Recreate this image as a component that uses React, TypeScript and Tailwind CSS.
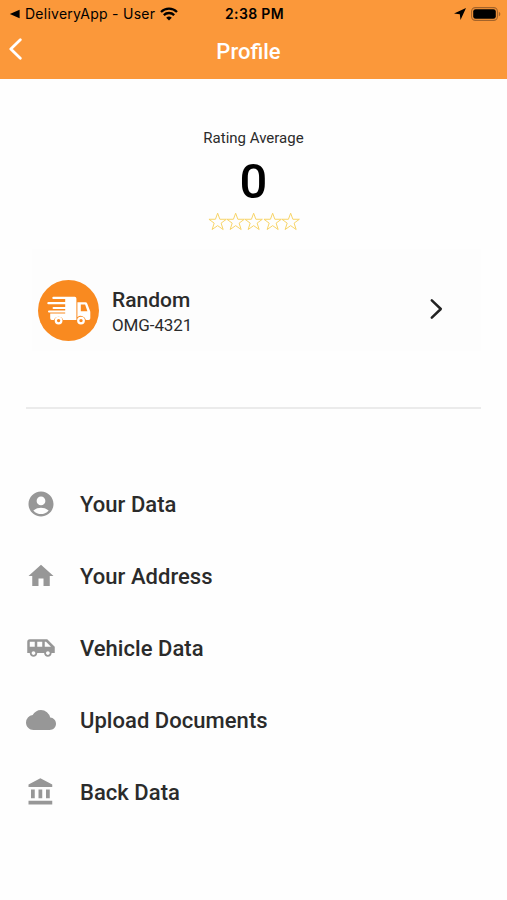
import type { ReactNode } from 'react'
import { MdAccountCircle, MdAirportShuttle, MdCloud, MdHome } from 'react-icons/md'

const StatusBar = () => (
  <div className="grid h-[27px] grid-cols-3 items-center pr-1.5 pl-2 font-[Inter,sans-serif] text-black">
    <div className="flex items-center whitespace-nowrap">
      <svg className="shrink-0" width="12" height="10" viewBox="0 0 12 10">
        <path d="M1.8 5 11.6 .8v8.4z" />
      </svg>
      <span className="ml-[5px] text-[14px] tracking-[0.26px]">DeliveryApp - User</span>
      <svg className="ml-[5px] shrink-0" width="18" height="14" viewBox="0 0 18 14" fill="none" stroke="currentColor" strokeWidth="2.3">
        <path d="M1 5a11.4 11.4 0 0 1 16 0M3.8 8.1a7.5 7.5 0 0 1 10.4 0" />
        <path d="M9 13.6 6.2 10.8a4 4 0 0 1 5.6 0z" fill="currentColor" stroke="none" />
      </svg>
    </div>
    <span className="text-center text-[14px] font-semibold tracking-[0.35px]">2:38 PM</span>
    <div className="flex items-center justify-end">
      <svg width="12" height="12" viewBox="0 0 12 12">
        <path d="M12 0 0 5.6l5.8.6.7 5.8z" />
      </svg>
      <svg className="ml-[5px]" width="30" height="14" viewBox="0 0 30 14">
        <rect x=".6" y=".6" width="25.8" height="12.8" rx="3.8" fill="none" stroke="#a3632a" strokeWidth="1.1" />
        <rect x="2.2" y="2.2" width="22.6" height="9.6" rx="2.4" />
        <path d="M27.8 4.7c2 .8 2 3.8 0 4.6z" fill="#a3632a" />
      </svg>
    </div>
  </div>
)

const Header = () => (
  <header className="h-[79px] bg-[#fb983a]">
    <StatusBar />
    <div className="grid h-12 grid-cols-[1fr_auto_1fr] items-center pr-2.5 pl-2">
      <button aria-label="Back" className="-mt-1">
        <svg width="15" height="22" viewBox="0 0 15 22" fill="none" stroke="#fff" strokeWidth="2.8" strokeLinecap="round" strokeLinejoin="round">
          <path d="M12.3 1.8 2.8 11l9.5 9.2" />
        </svg>
      </button>
      <h1 className="-ml-2 text-[22px] font-medium text-white">Profile</h1>
    </div>
  </header>
)

const Star = () => (
  <svg className="-mr-px" width="19.3" height="19" viewBox="0 0 20 19" fill="none" stroke="#f7d264" strokeWidth="1">
    <path d="M10 .9 12.3 7.2H19l-5.4 4 2.1 6.6L10 13.8l-5.7 4 2.1-6.6L1 7.2h6.7z" />
  </svg>
)

const TruckBadge = () => (
  <svg className="shrink-0" width="61" height="61" viewBox="0 0 61 61">
    <circle cx="30.5" cy="30.5" r="30.5" fill="#f98a20" />
    <g fill="#fff">
      <path d="M15.4 16.8h21.3q1.7 0 1.7 1.7V40H25.2a4.9 4.9 0 0 0-9.2 0h-2.2q-1.6 0-1.6-1.7v-4.8h15v-.9H11a1 1 0 0 1 0-2h16.2v-1.6H15.6a1 1 0 0 1 0-2.1h11.6v-2.6H10.4a1.1 1.1 0 0 1 0-2.2h16.8V19H15.4a1.1 1.1 0 0 1 0-2.2z" />
      <path fillRule="evenodd" d="M39.4 22.3h8.1q1.2 0 1.7 1.2l2.6 6.8q.5 1 .5 2v6q0 1.7-1.6 1.7h-2.8a5.1 5.1 0 0 0-8.5-2.7zm3.4 2.2v6.8h6.6l-2.3-6.8z" />
    </g>
    <g fill="none" stroke="#fff" strokeWidth="2.2">
      <circle cx="20.6" cy="40.6" r="2.8" />
      <circle cx="43" cy="40.6" r="2.8" />
    </g>
  </svg>
)

const BankIcon = () => (
  <svg width="30" height="30" viewBox="0 0 24 24" fill="currentColor">
    <path d="M4 10v7h3v-7H4zm6 0v7h3v-7h-3zM2 22h19v-3H2v3zm14-12v7h3v-7h-3zM11.5 1 2 6v2h19V6l-9.5-5z" />
  </svg>
)

const menuItems: { label: string; icon: ReactNode }[] = [
  { label: 'Your Data', icon: <MdAccountCircle size={30} /> },
  { label: 'Your Address', icon: <MdHome size={30} /> },
  { label: 'Vehicle Data', icon: <MdAirportShuttle size={30} /> },
  { label: 'Upload Documents', icon: <MdCloud size={30} /> },
  { label: 'Back Data', icon: <BankIcon /> }
]

export default function App() {
  return (
    <div className="h-screen overflow-hidden bg-[#fefefe] font-[Roboto,sans-serif] text-[#2b2b2b]">
      <Header />

      {/* Rating */}
      <section className="flex flex-col items-center pt-[49px]">
        <p className="text-[15px] leading-5">Rating Average</p>
        <p className="mt-1.5 text-[49px] leading-[56px] font-medium text-black">0</p>
        <div className="mt-0.5 flex">
          {[1, 2, 3, 4, 5].map((n) => (
            <Star key={n} />
          ))}
        </div>
      </section>

      {/* Vehicle card */}
      <section className="mt-[18px] mr-[26px] ml-8 flex h-[102px] items-center bg-[#fdfdfd] pt-5 pr-[37px] pl-1.5">
        <TruckBadge />
        <div className="ml-[13px] flex-1 pt-[5px]">
          <p className="text-[21px] leading-6 font-medium">Random</p>
          <p className="text-[17px] leading-[26px] tracking-[-0.1px]">OMG-4321</p>
        </div>
        <svg className="-mt-0.5" width="15" height="22" viewBox="0 0 15 22" fill="none" stroke="#222" strokeWidth="2.5" strokeLinecap="round" strokeLinejoin="round">
          <path d="M2.8 2.4 11.8 11l-9 8.6" />
        </svg>
      </section>

      <hr className="mx-[26px] mt-[56px] border-t-2 border-[#ebebeb]" />

      {/* Menu */}
      <nav className="mt-[59px]">
        {menuItems.map((item) => (
          <div key={item.label} className="flex h-[72px] items-center pl-[26px]">
            <span className="text-[#979797]">{item.icon}</span>
            <span className="ml-6 pt-px text-[22px] font-medium tracking-[0.04px]">{item.label}</span>
          </div>
        ))}
      </nav>
    </div>
  )
}
